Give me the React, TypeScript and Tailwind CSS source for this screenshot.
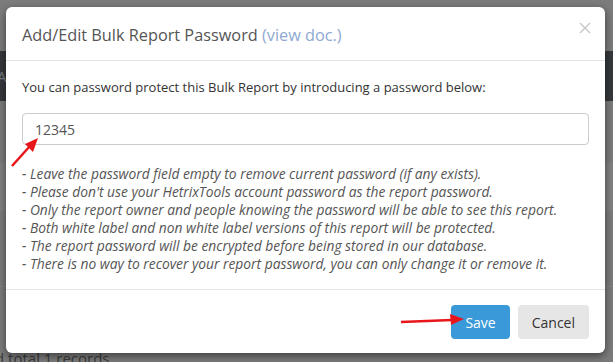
import React from 'react';

const notes = [
  "- Leave the password field empty to remove current password (if any exists).",
  "- Please don't use your HetrixTools account password as the report password.",
  '- Only the report owner and people knowing the password will be able to see this report.',
  '- Both white label and non white label versions of this report will be protected.',
  '- The report password will be encrypted before being stored in our database.',
  '- There is no way to recover your report password, you can only change it or remove it.',
];

export default function App() {
  return (
    <div
      className="relative h-[362px] w-[613px] overflow-hidden bg-[#7c7c7c]"
      style={{ fontFamily: '"Open Sans", "Liberation Sans", sans-serif' }}
    >
      {/* page behind the dimmed backdrop */}
      <div className="flex h-full flex-col">
        <div className="h-[51px]" />
        <div className="flex h-[50px] items-center bg-[#35383c] text-[15px] text-[#7d8085]">
          <span className="-ml-[3px]">A</span>
        </div>
        <div className="h-[62px]" />
        <div className="h-[48px] bg-[#828282]" />
        <div className="flex-1" />
        <div className="h-[1px] bg-[#858585]" />
        <div className="h-[60px]" />
        <div className="-ml-[5px] h-[15px] text-[15px] leading-[22px] text-[#3a3a3a]">d total 1 records</div>
      </div>

      {/* modal */}
      <div className="absolute left-[6px] top-[7px] flex h-[346px] w-[599px] flex-col rounded-[6px] bg-white shadow-[0_3px_9px_rgba(0,0,0,0.5)]">
        <div className="flex h-[54px] items-start justify-between border-b border-[#e5e5e5] px-4 pt-[16px]">
          <h4 className="text-[16.3px] leading-[24px] text-[#555]">
            Add/Edit Bulk Report Password <span className="text-[#8fa9d3]">(view doc.)</span>
          </h4>
          <button className="mr-[-2px] mt-[-1px]">
            <svg width="12" height="12" viewBox="0 0 12 12">
              <path d="M1 1 L11 11 M11 1 L1 11" stroke="#c6c6c6" strokeWidth="1.4" fill="none" />
            </svg>
          </button>
        </div>

        <div className="flex flex-col border-b border-[#e5e5e5] px-4 pb-[16px] pt-[16px]">
          <p className="text-[13px] leading-[20px] text-[#333]">
            You can password protect this Bulk Report by introducing a password below:
          </p>
          <div className="mt-[16px] flex h-[32px] items-center rounded-[4px] border border-[#ccc] px-[12px] text-[14px] text-[#555]">
            12345
          </div>
          <div className="mt-[20px] flex flex-col text-[13.8px] italic leading-[18px] text-[#555]">
            {notes.map((n) => (
              <span key={n}>{n}</span>
            ))}
          </div>
        </div>

        <div className="flex flex-1 items-start justify-end gap-2 px-4 pt-[15px]">
          <button className="h-[34px] rounded-[4px] bg-[#3a9ad9] px-[14px] text-[14px] text-white">Save</button>
          <button className="h-[34px] rounded-[4px] bg-[#e6e6e6] px-[14px] text-[14px] text-[#333]">Cancel</button>
        </div>
      </div>

      {/* annotation arrows */}
      <svg className="pointer-events-none absolute left-0 top-0" width="613" height="362">
        <line x1="12" y1="166" x2="30" y2="146" stroke="#e8161b" strokeWidth="2.5" />
        <polygon points="38,138 25,144 33,152" fill="#e8161b" />
        <line x1="401" y1="322" x2="452" y2="320" stroke="#e8161b" strokeWidth="2.5" />
        <polygon points="464,319 450,314 451,325" fill="#e8161b" />
      </svg>
    </div>
  );
}
